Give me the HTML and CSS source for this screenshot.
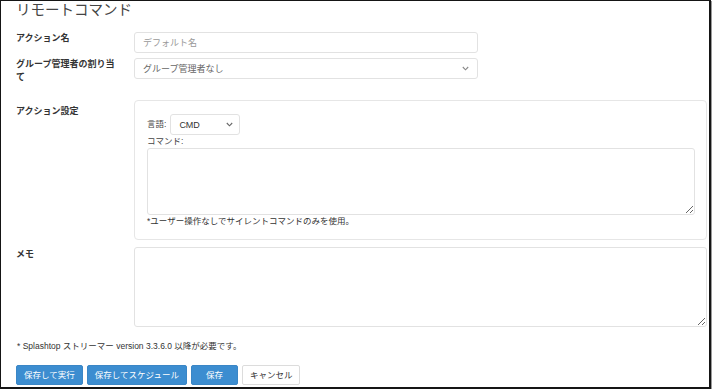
FILE: index.html
```html
<!DOCTYPE html>
<html lang="ja">
<head>
<meta charset="utf-8">
<title>リモートコマンド</title>
<link rel="stylesheet" href="styles.css">
</head>
<body>
<div class="frame">
  <h1 class="title">リモートコマンド</h1>
  <div class="form">
    <div class="row row-name">
      <div class="label">アクション名</div>
      <div class="field"><input class="input" type="text" placeholder="デフォルト名"></div>
    </div>
    <div class="row row-group">
      <div class="label">グループ管理者の割り当て</div>
      <div class="field">
        <div class="select select-wide"><span>グループ管理者なし</span>
          <svg class="chev" width="7" height="5" viewBox="0 0 7 5"><path d="M0.8 1 L3.5 3.8 L6.2 1" fill="none" stroke="#888" stroke-width="1.1"/></svg>
        </div>
      </div>
    </div>
    <div class="row row-settings">
      <div class="label label-settings">アクション設定</div>
      <div class="field">
        <div class="panel">
          <div class="lang">
            <span class="small-label">言語:</span>
            <div class="select select-lang"><span>CMD</span>
              <svg class="chev" width="7" height="5" viewBox="0 0 7 5"><path d="M0.8 1 L3.5 3.8 L6.2 1" fill="none" stroke="#666" stroke-width="1.1"/></svg>
            </div>
          </div>
          <div class="small-label">コマンド:</div>
          <textarea class="textarea textarea-cmd"></textarea>
          <div class="hint">*ユーザー操作なしでサイレントコマンドのみを使用。</div>
        </div>
      </div>
    </div>
    <div class="row row-memo">
      <div class="label label-memo">メモ</div>
      <div class="field"><textarea class="textarea textarea-memo"></textarea></div>
    </div>
  </div>
  <p class="note">* Splashtop ストリーマー version 3.3.6.0 以降が必要です。</p>
  <div class="buttons">
    <button class="btn btn-primary">保存して実行</button>
    <button class="btn btn-primary">保存してスケジュール</button>
    <button class="btn btn-primary btn-save">保存</button>
    <button class="btn btn-default">キャンセル</button>
  </div>
</div>
</body>
</html>
```

FILE: styles.css
```css
html, body {
  margin: 0;
  padding: 0;
  background: #fff;
}
body {
  font-family: "Liberation Sans", "Noto Sans CJK JP", sans-serif;
  color: #333;
}
.frame {
  box-sizing: border-box;
  width: 711px;
  height: 389px;
  border: 1px solid #151515;
  border-right-width: 2px;
  border-bottom-width: 2px;
  box-shadow: 1px 1px 0 #9a9a9a;
  padding: 0 0 0 15px;
  overflow: hidden;
}
.title {
  margin: 0;
  font-size: 14.5px;
  font-weight: normal;
  line-height: 19px;
  color: #444;
}
.form {
  margin-top: 12px;
}
.row {
  display: grid;
  grid-template-columns: 118px 1fr;
}
.row-group { margin-top: 5px; }
.row-settings { margin-top: 16px; }
.row-memo { margin-top: 7px; }
.label {
  font-size: 9px;
  font-weight: bold;
  line-height: 13px;
  color: #333;
  padding-right: 14px;
}
.label-settings { padding-top: 5px; }
.label-memo { padding-top: 1px; }
.field {
  min-width: 0;
}
.input, .select-wide {
  width: 344px;
}
.input, .select {
  box-sizing: border-box;
  height: 21px;
  border: 1px solid #e2e2e2;
  border-radius: 3px;
  background: #fff;
  font-family: inherit;
  font-size: 9px;
  padding: 0 8px;
  color: #555;
  outline: none;
  display: block;
  margin: 0;
}
.input::placeholder {
  color: #999;
}
.select {
  display: flex;
  align-items: center;
  justify-content: space-between;
}
.select-wide span { color: #666; }
.chev { flex: none; }
.panel {
  box-sizing: border-box;
  width: 573px;
  border: 1px solid #e6e6e6;
  border-radius: 4px;
  padding: 13px 11px 11px 12px;
}
.lang {
  display: flex;
  align-items: center;
  gap: 4px;
}
.small-label {
  font-size: 8.5px;
  line-height: 13px;
  color: #444;
}
.select-lang {
  width: 70px;
  padding: 0 6px 0 8px;
  color: #333;
}
.textarea {
  box-sizing: border-box;
  display: block;
  margin: 0;
  border: 1px solid #e2e2e2;
  border-radius: 3px;
  background: #fff;
  font-family: inherit;
  font-size: 9px;
  outline: none;
  resize: both;
}
.textarea-cmd {
  width: 548px;
  height: 67px;
}
.textarea-memo {
  width: 573px;
  height: 80px;
}
.hint {
  font-size: 8.5px;
  line-height: 13px;
  color: #333;
}
.note {
  margin: 13px 0 0 1px;
  font-size: 8.5px;
  line-height: 13px;
  color: #333;
}
.buttons {
  display: flex;
  gap: 4px;
  margin-top: 12px;
}
.btn {
  box-sizing: border-box;
  height: 20px;
  margin: 0;
  border-radius: 2px;
  font-family: inherit;
  font-size: 8.5px;
  padding: 0 7px;
  line-height: 18px;
}
.btn-primary {
  background: #3c8dd0;
  border: 1px solid #3a86c6;
  color: #fff;
}
.btn-save {
  padding: 0 14px;
}
.btn-default {
  background: #fff;
  border: 1px solid #dcdcdc;
  color: #333;
}
```
